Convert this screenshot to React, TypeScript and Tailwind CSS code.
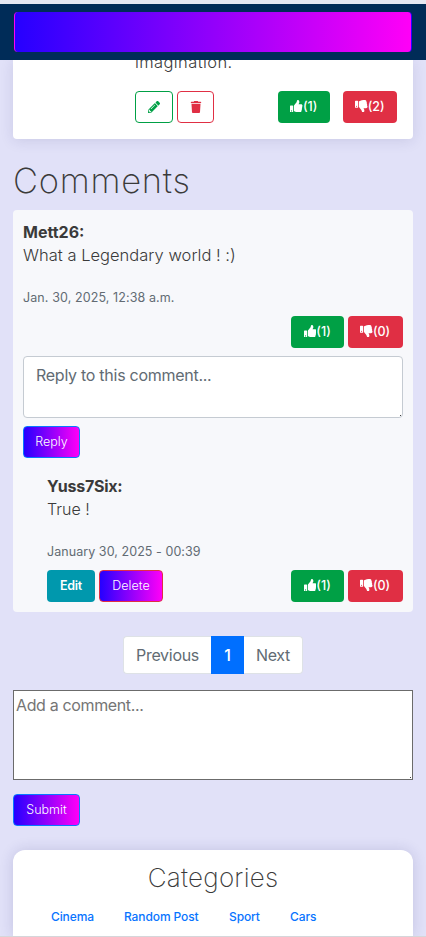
import type { ReactNode } from "react";
import { FaPencilAlt, FaThumbsDown, FaThumbsUp } from "react-icons/fa";
import { FaTrash } from "react-icons/fa6";

const GRADIENT = "bg-[linear-gradient(90deg,#2600ff,#ff00f7)]";

function Votes({ up, down, className }: { up: number; down: number; className: string }) {
  return (
    <div className={`flex ${className}`}>
      <button className="flex h-8 grow items-center justify-center rounded bg-[#00a045] text-[12.5px] font-medium text-white">
        <FaThumbsUp className="mb-[2px] size-[12.5px]" />({up})
      </button>
      <button className="flex h-8 grow items-center justify-center rounded bg-[#e02f44] text-[12.5px] font-medium text-white">
        <FaThumbsDown className="mb-[2px] size-[12.5px]" />({down})
      </button>
    </div>
  );
}

function GradientButton({ children, className }: { children: ReactNode; className: string }) {
  return (
    <button className={`flex h-8 items-center justify-center rounded border text-[12.5px] font-light text-white ${GRADIENT} ${className}`}>
      {children}
    </button>
  );
}

function Grip() {
  return <span className="absolute right-[2px] bottom-[2px] size-px bg-[#444]" />;
}

export default function App() {
  return (
    <div className="flex h-[937px] w-[426px] flex-col overflow-hidden bg-[#e1e1f8] font-[Inter,sans-serif] text-[#3a3a3a]">
      <div className="h-1 shrink-0 bg-[#e5e8f3]" />
      <header className="z-10 h-14 shrink-0 bg-[#002c58] px-[14px] py-2">
        <div className={`h-10 w-[398px] rounded border-x border-l-[#ff00f7] border-r-[#2600ff] ${GRADIENT}`} />
      </header>

      <main className="flex grow flex-col px-[13px]">
        <section className="h-[79px] shrink-0 rounded-b bg-white pr-4 pl-[122px] shadow-[0_2px_14px_rgba(40,40,110,0.12)]">
          <p className="-mt-[10px] h-[41px] text-[16.5px] leading-6 font-light tracking-[0.4px]">imagination.</p>
          <div className="flex">
            <button className="mr-1 flex h-8 w-[38px] items-center justify-center rounded border border-[#00a045] text-[#00a045]">
              <FaPencilAlt className="size-3" />
            </button>
            <button className="flex h-8 w-[37px] items-center justify-center rounded border border-[#e02f44] text-[#e02f44]">
              <FaTrash className="size-3" />
            </button>
            <Votes up={1} down={2} className="ml-auto w-[119px] gap-[13px]" />
          </div>
        </section>

        <h1 className="mt-[22px] h-[49px] shrink-0 text-[34.5px] leading-10 font-extralight tracking-[0.75px]">Comments</h1>

        <section className="h-[402px] shrink-0 rounded bg-[#f7f8fb] px-[10px] pt-[11px]">
          <div className="text-[16px] leading-[23px] font-bold">Mett26:</div>
          <p className="h-[36px] text-[16.5px] leading-[23px] font-light tracking-[0.02px]">What a Legendary world ! :)</p>
          <time className="block h-[36px] pt-[8px] text-[12.5px] leading-[20px] tracking-[0.1px] text-[#626b73]">Jan. 30, 2025, 12:38 a.m.</time>
          <Votes up={1} down={0} className="ml-auto w-[112px] gap-1" />
          <div className="relative mt-2">
            <textarea
              className="block h-[62px] w-full resize-none rounded border border-[#c5cbd2] bg-white px-3 py-[6px] text-[16px] leading-6 tracking-[-0.27px] placeholder:text-[#626b73]"
              placeholder="Reply to this comment..."
            />
            <Grip />
          </div>
          <GradientButton className="mt-2 w-[57px] border-[#0878ff]">Reply</GradientButton>
          <div className="pt-[17px] pl-6">
            <div className="text-[16px] leading-[23px] font-bold tracking-[-0.25px]">Yuss7Six:</div>
            <p className="h-[36px] text-[16px] leading-[23px] font-light">True !</p>
            <time className="block h-[36px] pt-[8px] text-[12.5px] leading-[20px] tracking-[0.06px] text-[#626b73]">January 30, 2025 - 00:39</time>
            <div className="flex">
              <button className="mr-1 h-8 w-12 rounded bg-[#0098ad] text-[12.5px] font-semibold tracking-[-0.3px] text-white">Edit</button>
              <GradientButton className="w-16 border-[#e02f44]">Delete</GradientButton>
              <Votes up={1} down={0} className="ml-auto w-[112px] gap-1" />
            </div>
          </div>
        </section>

        <nav className="mt-6 ml-[110px] flex h-[38px] w-[180px] shrink-0 text-[16px] tracking-[-0.3px] text-[#626b73]">
          <button className="w-[88px] rounded-l border border-r-0 border-[#dee2e6] bg-white">Previous</button>
          <button className="w-[33px] bg-[#006fff] font-medium text-white">1</button>
          <button className="grow rounded-r border border-l-0 border-[#dee2e6] bg-white">Next</button>
        </nav>

        <div className="relative mt-4 shrink-0">
          <textarea
            className="block h-[90px] w-full resize-none border border-[#6b6b6b] bg-white px-0.5 py-[2px] text-[16px] leading-6 tracking-[-0.36px] placeholder:text-[#757575]"
            placeholder="Add a comment..."
          />
          <Grip />
        </div>
        <GradientButton className="mt-[14px] w-[67px] shrink-0 border-[#0878ff]">Submit</GradientButton>

        <section className="mt-6 h-[86px] shrink-0 rounded-t-[12px] bg-white shadow-[0_0_14px_rgba(40,40,110,0.16)]">
          <h2 className="pt-[12px] text-center text-[26px] leading-8 font-extralight tracking-[0.25px]">Categories</h2>
          <div className="flex pt-[13px] pl-[38px] text-[12px] leading-5 font-medium tracking-[-0.1px] text-[#0874ff]">
            <a className="w-[73px]">Cinema</a>
            <a className="w-[105px]">Random Post</a>
            <a className="w-[61px]">Sport</a>
            <a>Cars</a>
          </div>
        </section>
      </main>
      <div className="z-10 h-px shrink-0 bg-[#d5d6da]" />
    </div>
  );
}
